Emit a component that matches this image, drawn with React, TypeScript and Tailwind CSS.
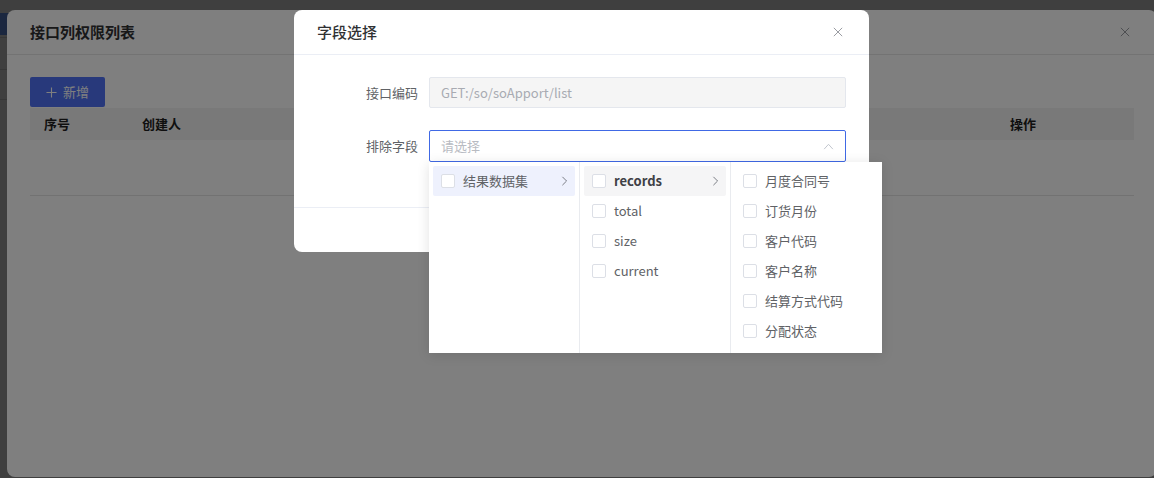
import React from 'react';

const font = { fontFamily: '"Noto Sans CJK SC", "Noto Sans", sans-serif' };

const CloseIcon = ({ className }: { className?: string }) => (
  <svg viewBox="0 0 12 12" className={className} fill="none" stroke="currentColor" strokeWidth="1.1">
    <path d="M1 1 L11 11 M11 1 L1 11" />
  </svg>
);

const ChevronRight = () => (
  <svg viewBox="0 0 8 12" className="w-[7px] h-[10px] text-[#6f7278]" fill="none" stroke="currentColor" strokeWidth="1.1">
    <path d="M1.5 1 L6.5 6 L1.5 11" />
  </svg>
);

const Checkbox = () => (
  <span className="w-[14px] h-[14px] shrink-0 rounded-[2px] border border-[#dcdfe6] bg-white" />
);

type Item = { label: string; bold?: boolean; hasChildren?: boolean; active?: 'blue' | 'gray' };

const columns: Item[][] = [
  [{ label: '结果数据集', hasChildren: true, active: 'blue' }],
  [
    { label: 'records', bold: true, hasChildren: true, active: 'gray' },
    { label: 'total' },
    { label: 'size' },
    { label: 'current' },
  ],
  [
    { label: '月度合同号' },
    { label: '订货月份' },
    { label: '客户代码' },
    { label: '客户名称' },
    { label: '结算方式代码' },
    { label: '分配状态' },
  ],
];

const CascaderPanel = () => (
  <div className="absolute left-[429px] top-[162px] h-[191px] flex bg-white shadow-[0_2px_12px_rgba(0,0,0,0.12)]">
    {columns.map((col, ci) => (
      <div
        key={ci}
        className={`w-[151px] h-full px-1 py-1 ${ci < columns.length - 1 ? 'border-r border-[#e9ebef]' : ''}`}
      >
        {col.map(item => (
          <div
            key={item.label}
            className={`h-[30px] flex items-center pl-2 pr-[7px] rounded-[2px] ${
              item.active === 'blue' ? 'bg-[#eef1fd]' : item.active === 'gray' ? 'bg-[#f5f5f6]' : ''
            }`}
          >
            <Checkbox />
            <span
              className={`ml-2 flex-1 text-[13px] ${item.bold ? 'font-bold text-[#3f4146]' : 'text-[#606266]'}`}
            >
              {item.label}
            </span>
            {item.hasChildren && <ChevronRight />}
          </div>
        ))}
      </div>
    ))}
  </div>
);

const FieldDialog = () => (
  <div className="absolute left-[294px] top-[10px] w-[575px] bg-white rounded-lg">
    <div className="h-[45px] flex items-center justify-between pl-[23px] pr-[26px] border-b border-[#ebeef5]">
      <span className="text-[15px] font-medium text-[#303133]">字段选择</span>
      <CloseIcon className="w-[10px] h-[10px] text-[#909399]" />
    </div>
    <div className="pt-[22px] pb-[45px] pl-[20px] pr-[23px] flex flex-col gap-[22px]">
      <div className="flex items-center">
        <label className="w-[104px] text-right text-[13px] text-[#606266]">接口编码</label>
        <div className="ml-[11px] flex-1 h-[31px] flex items-center px-[11px] bg-[#f5f5f5] border border-[#e4e7ed] rounded-[2px] text-[13px] text-[#a8abb2]">
          GET:/so/soApport/list
        </div>
      </div>
      <div className="flex items-center">
        <label className="w-[104px] text-right text-[13px] text-[#606266]">排除字段</label>
        <div className="ml-[11px] flex-1 h-[32px] flex items-center justify-between px-[11px] border border-[#4069e5] rounded-[2px]">
          <span className="text-[13px] text-[#b8bbc2]">请选择</span>
          <svg viewBox="0 0 12 8" className="w-[11px] h-[7px] text-[#c0c4cc]" fill="none" stroke="currentColor" strokeWidth="1.1">
            <path d="M1 7 L6 1.5 L11 7" />
          </svg>
        </div>
      </div>
    </div>
    <div className="h-[45px] border-t border-[#ebeef5]" />
  </div>
);

const ListDialog = () => (
  <div className="absolute left-[7px] top-[10px] w-[1150px] h-[467px] bg-white rounded-lg">
    <div className="h-[45px] flex items-center justify-between pl-[23px] pr-[27px] border-b border-[#e6e6e6]">
      <span className="text-[15px] font-bold text-[#303133]">接口列权限列表</span>
      <CloseIcon className="w-[10px] h-[10px] text-[#909399]" />
    </div>
    <div className="pt-[22px] pl-[23px] pr-[20px]">
      <button className="h-[30px] w-[75px] flex items-center justify-center gap-[6px] rounded-[2px] bg-[#5073f7] text-white text-[13px]">
        <svg viewBox="0 0 12 12" className="w-[11px] h-[11px]" fill="none" stroke="currentColor" strokeWidth="1.2">
          <path d="M6 0.5 V11.5 M0.5 6 H11.5" />
        </svg>
        新增
      </button>
      <div className="w-[1104px] mt-[1px]">
        <div className="h-[32px] flex items-center bg-[#f3f3f3] text-[13px] font-bold text-[#1f1f1f]">
          <div className="w-[98px] pl-[14px]">序号</div>
          <div className="flex-1 pl-[14px]">创建人</div>
          <div className="w-[138px] pl-[14px]">操作</div>
        </div>
        <div className="h-[56px] border-b border-[#e4e4e4]" />
      </div>
    </div>
  </div>
);

const App = () => {
  return (
    <div className="relative w-[1154px] h-[478px] overflow-hidden bg-white" style={font}>
      {/* page underneath */}
      <div className="pt-[13px] flex flex-col">
        <div className="w-[60px] h-[22px] bg-[#6f9cff]" />
        <div className="h-[3px] border-b border-[#dcdcdc]" />
        <div className="h-[32px] border-b border-[#dcdcdc]" />
        <div className="h-[30px] border-b border-[#dcdcdc]" />
      </div>
      <div className="absolute inset-0 bg-black/50" />
      <ListDialog />
      <div className="absolute inset-0 bg-black/50" />
      <FieldDialog />
      <CascaderPanel />
    </div>
  );
};

export default App;
